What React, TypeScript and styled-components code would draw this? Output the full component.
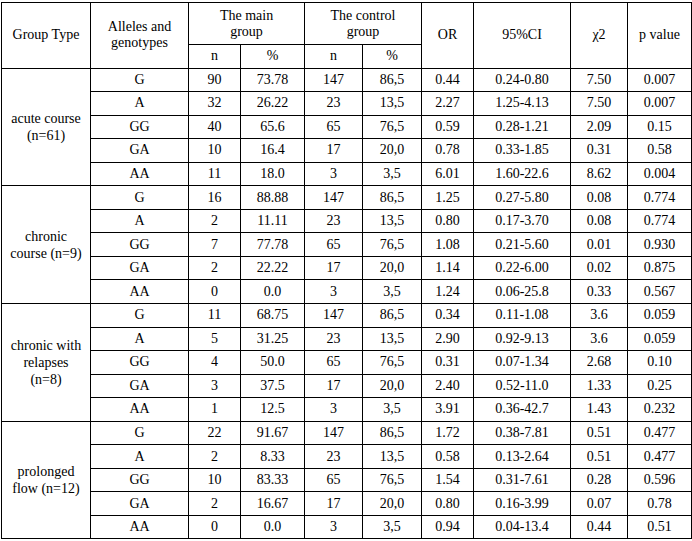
import React from 'react';
import styled, { createGlobalStyle } from 'styled-components';

const GlobalStyle = createGlobalStyle`
  body {
    margin: 0;
    background: #ffffff;
    font-family: "Liberation Serif", "Times New Roman", serif;
    color: #000000;
  }
`;

const Page = styled.div`
  padding: 2px 0 0 1px;
`;

const Table = styled.table`
  border-collapse: collapse;
  table-layout: fixed;
  width: 690px;
  font-size: 14px;
  line-height: 16px;
`;

const HeadCell = styled.th<{ $h?: number; $pad?: number }>`
  border: 1px solid #000;
  font-weight: normal;
  text-align: center;
  vertical-align: middle;
  padding: 0 ${(p) => p.$pad ?? 4}px;
  height: ${(p) => p.$h ?? 23}px;
`;

const Cell = styled.td`
  border: 1px solid #000;
  text-align: center;
  vertical-align: middle;
  padding: 0 4px;
  height: 22.55px;
  white-space: nowrap;
`;

const GroupCell = styled.td`
  border: 1px solid #000;
  text-align: center;
  vertical-align: middle;
  padding: 0 6px;
  line-height: 17px;
`;

type Row = [string, string, string, string, string, string, string, string, string];

type Group = { label: string; rows: Row[] };

const groups: Group[] = [
  {
    label: 'acute course (n=61)',
    rows: [
      ['G', '90', '73.78', '147', '86,5', '0.44', '0.24-0.80', '7.50', '0.007'],
      ['A', '32', '26.22', '23', '13,5', '2.27', '1.25-4.13', '7.50', '0.007'],
      ['GG', '40', '65.6', '65', '76,5', '0.59', '0.28-1.21', '2.09', '0.15'],
      ['GA', '10', '16.4', '17', '20,0', '0.78', '0.33-1.85', '0.31', '0.58'],
      ['AA', '11', '18.0', '3', '3,5', '6.01', '1.60-22.6', '8.62', '0.004'],
    ],
  },
  {
    label: 'chronic course (n=9)',
    rows: [
      ['G', '16', '88.88', '147', '86,5', '1.25', '0.27-5.80', '0.08', '0.774'],
      ['A', '2', '11.11', '23', '13,5', '0.80', '0.17-3.70', '0.08', '0.774'],
      ['GG', '7', '77.78', '65', '76,5', '1.08', '0.21-5.60', '0.01', '0.930'],
      ['GA', '2', '22.22', '17', '20,0', '1.14', '0.22-6.00', '0.02', '0.875'],
      ['AA', '0', '0.0', '3', '3,5', '1.24', '0.06-25.8', '0.33', '0.567'],
    ],
  },
  {
    label: 'chronic with relapses (n=8)',
    rows: [
      ['G', '11', '68.75', '147', '86,5', '0.34', '0.11-1.08', '3.6', '0.059'],
      ['A', '5', '31.25', '23', '13,5', '2.90', '0.92-9.13', '3.6', '0.059'],
      ['GG', '4', '50.0', '65', '76,5', '0.31', '0.07-1.34', '2.68', '0.10'],
      ['GA', '3', '37.5', '17', '20,0', '2.40', '0.52-11.0', '1.33', '0.25'],
      ['AA', '1', '12.5', '3', '3,5', '3.91', '0.36-42.7', '1.43', '0.232'],
    ],
  },
  {
    label: 'prolonged flow (n=12)',
    rows: [
      ['G', '22', '91.67', '147', '86,5', '1.72', '0.38-7.81', '0.51', '0.477'],
      ['A', '2', '8.33', '23', '13,5', '0.58', '0.13-2.64', '0.51', '0.477'],
      ['GG', '10', '83.33', '65', '76,5', '1.54', '0.31-7.61', '0.28', '0.596'],
      ['GA', '2', '16.67', '17', '20,0', '0.80', '0.16-3.99', '0.07', '0.78'],
      ['AA', '0', '0.0', '3', '3,5', '0.94', '0.04-13.4', '0.44', '0.51'],
    ],
  },
];

const widths = [89, 98, 52, 64, 58, 59, 52, 97, 57, 64];

const App = () => (
  <Page>
    <GlobalStyle />
    <Table>
      <colgroup>
        {widths.map((w, i) => (
          <col key={i} style={{ width: w }} />
        ))}
      </colgroup>
      <thead>
        <tr>
          <HeadCell rowSpan={2}>Group Type</HeadCell>
          <HeadCell rowSpan={2}>Alleles and genotypes</HeadCell>
          <HeadCell colSpan={2} $h={41} $pad={20}>The main group</HeadCell>
          <HeadCell colSpan={2} $h={41} $pad={20}>The control group</HeadCell>
          <HeadCell rowSpan={2}>OR</HeadCell>
          <HeadCell rowSpan={2}>95%CI</HeadCell>
          <HeadCell rowSpan={2}>χ2</HeadCell>
          <HeadCell rowSpan={2}>p value</HeadCell>
        </tr>
        <tr>
          <HeadCell $h={22.5}>n</HeadCell>
          <HeadCell $h={22.5}>%</HeadCell>
          <HeadCell $h={22.5}>n</HeadCell>
          <HeadCell $h={22.5}>%</HeadCell>
        </tr>
      </thead>
      <tbody>
        {groups.map((g) =>
          g.rows.map((r, i) => (
            <tr key={g.label + i}>
              {i === 0 && <GroupCell rowSpan={g.rows.length}>{g.label}</GroupCell>}
              {r.map((v, j) => (
                <Cell key={j}>{v}</Cell>
              ))}
            </tr>
          ))
        )}
      </tbody>
    </Table>
  </Page>
);

export default App;
